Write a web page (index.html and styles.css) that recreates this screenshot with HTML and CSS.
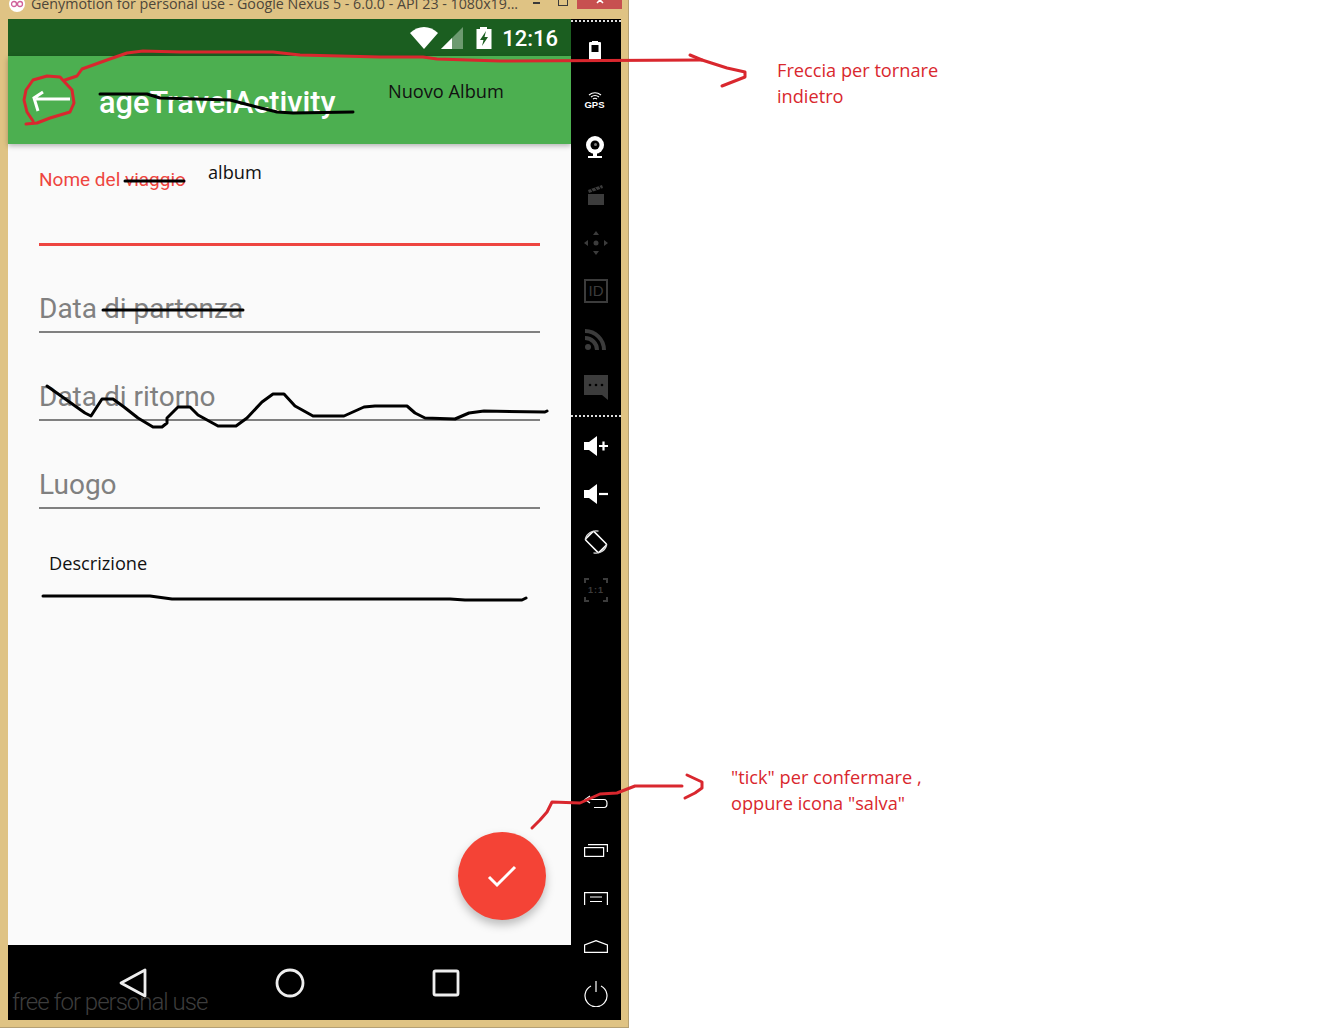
FILE: index.html
```html
<!DOCTYPE HTML>
<html>
	<head>
		<meta charset="utf-8">
		<title>Nuovo Album</title>
		<link rel="stylesheet" href="styles.css">
	</head>
	<body>
		<div class="window">
			<div class="titlebar">
				<svg class="app-logo" width="16" height="12" viewBox="0 0 16 12"><circle cx="8" cy="4" r="8" fill="#fff"/><circle cx="5" cy="4" r="2.5" fill="none" stroke="#d0609a" stroke-width="1.3"/><circle cx="11" cy="4" r="2.5" fill="none" stroke="#d0609a" stroke-width="1.3"/></svg>
				<span class="window-title">Genymotion for personal use - Google Nexus 5 - 6.0.0 - API 23 - 1080x19...</span>
				<span class="win-min"></span>
				<span class="win-max"></span>
				<span class="win-close">
					<svg width="10" height="6" viewBox="0 0 10 6"><path d="M1 -3 L7 3 M7 -3 L1 3" transform="translate(1 0)" stroke="#fff" stroke-width="1.6" fill="none"/></svg>
				</span>
			</div>
			<div class="device">
				<div class="screen">
					<div class="statusbar">
						<svg width="28" height="22" viewBox="0 0 28 22"><path d="M0 6 C8 -2 20 -2 28 6 L14 22 Z" fill="#fff"/></svg>
						<svg class="signal" width="22" height="22" viewBox="0 0 22 22"><path d="M22 0 V22 H0 Z" fill="#6d9a70"/><path d="M11 11 V22 H0 Z" fill="#fff"/></svg>
						<svg class="batt" width="16" height="22" viewBox="0 0 16 22"><path d="M4 0 H11 V2 H15.500 V22 H0.500 V2 H4 Z" fill="#fff"/><path d="M10 4 L4 13 H7.500 L6 19 L12 10 H8.500 Z" fill="#1b5e20"/></svg>
						<span class="clock">12:16</span>
					</div>
					<div class="appbar">
						<svg class="up-arrow" width="40" height="26" viewBox="0 0 40 26"><path d="M39 9 H5 M12 2 L3 8 L7 21" fill="none" stroke="#fff" stroke-width="3"/></svg>
						<span class="app-title">ageTravelActivity</span>
					</div>
					<div class="content">
						<div class="field field-active"><span>Nome del viaggio</span></div>
						<div class="field"><span>Data di partenza</span></div>
						<div class="field"><span>Data di ritorno</span></div>
						<div class="field"><span>Luogo</span></div>
						<button class="fab">
							<svg width="30" height="24" viewBox="0 0 30 24"><path d="M2 13 L10 21 L28 3" fill="none" stroke="#fff" stroke-width="3"/></svg>
						</button>
					</div>
					<div class="navbar">
						<svg width="28" height="30" viewBox="0 0 28 30"><path d="M26 2 V28 L2 15 Z" fill="none" stroke="#eee" stroke-width="2.800" stroke-linejoin="round"/></svg>
						<svg width="30" height="30" viewBox="0 0 30 30"><circle cx="15" cy="15" r="13" fill="none" stroke="#eee" stroke-width="2.800"/></svg>
						<svg width="28" height="28" viewBox="0 0 28 28"><rect x="2" y="2" width="24" height="24" rx="1.500" fill="none" stroke="#eee" stroke-width="2.800"/></svg>
						<span class="watermark">free for personal use</span>
					</div>
				</div>
				<div class="sidebar">
					<div class="dots"></div>
					<div class="tool tool-left"><svg width="14" height="20" viewBox="0 0 14 20"><path d="M4 0 H10 V1 H12 Q13 1 13 2 V20 H1 V2 Q1 1 2 1 H4 Z" fill="#fff"/><rect x="3.500" y="4" width="7" height="7" fill="#000"/></svg></div>
					<div class="tool tool-left tool-gps">
						<svg width="14" height="8" viewBox="0 0 14 8"><path d="M1 3 Q7 -1.500 13 3 M3 5 Q7 2 11 5 M5 7 Q7 5.500 9 7" fill="none" stroke="#fff" stroke-width="1.200"/></svg>
						<span>GPS</span>
					</div>
					<div class="tool tool-left"><svg width="20" height="24" viewBox="0 0 20 24"><circle cx="10" cy="10" r="9" fill="#fff"/><circle cx="10" cy="10" r="4.500" fill="#000"/><circle cx="10.500" cy="9.500" r="1.500" fill="#777"/><path d="M8 18 V21 H3 V23 H17 V21 H12 V18 Z" fill="#fff"/></svg></div>
					<div class="tool dim"><svg width="18" height="20" viewBox="0 0 18 20"><path d="M1 9 H17 V20 H1 Z" fill="currentColor"/><path d="M1 5 L15 0 L16 3 L2 8 Z" fill="currentColor"/><path d="M4 4 L6 7 M8 2.500 L10 5.500 M12 1 L14 4" stroke="#000" stroke-width="1"/></svg></div>
					<div class="tool dim"><svg width="24" height="24" viewBox="0 0 24 24"><circle cx="12" cy="12" r="2.500" fill="currentColor"/><path d="M12 0 L15 4 H9 Z M12 24 L15 20 H9 Z M0 12 L4 9 V15 Z M24 12 L20 9 V15 Z" fill="currentColor"/></svg></div>
					<div class="tool dim"><div class="id-box">ID</div></div>
					<div class="tool dim"><svg width="22" height="22" viewBox="0 0 22 22"><circle cx="3" cy="19" r="3" fill="currentColor"/><path d="M0 10 A12 12 0 0 1 12 22 M0 3 A19 19 0 0 1 19 22" fill="none" stroke="currentColor" stroke-width="4"/></svg></div>
					<div class="tool dim"><svg width="24" height="25" viewBox="0 0 24 25"><path d="M0 0 H24 V25 L18 20 H0 Z" fill="currentColor"/><circle cx="6" cy="10" r="1.300" fill="#000"/><circle cx="12" cy="10" r="1.300" fill="#000"/><circle cx="18" cy="10" r="1.300" fill="#000"/></svg></div>
					<div class="dots dots-mid"></div>
					<div class="tool"><svg width="25" height="20" viewBox="0 0 25 20"><path d="M0 6 H5 L13 0 V20 L5 14 H0 Z" fill="#fff"/><path d="M15 10 H24 M19.500 5.500 V14.500" stroke="#fff" stroke-width="2.200"/></svg></div>
					<div class="tool"><svg width="25" height="20" viewBox="0 0 25 20"><path d="M0 6 H5 L13 0 V20 L5 14 H0 Z" fill="#fff"/><path d="M15 10 H24" stroke="#fff" stroke-width="2.200"/></svg></div>
					<div class="tool"><svg width="24" height="24" viewBox="0 0 24 24"><rect x="6" y="2.500" width="12" height="19" rx="1.500" transform="rotate(-45 12 12)" fill="none" stroke="#fff" stroke-width="1.500"/><path d="M1.200 9.500 A11 11 0 0 1 14.500 1.200 M22.800 14.500 A11 11 0 0 1 9.500 22.800" fill="none" stroke="#ddd" stroke-width="1.200"/></svg></div>
					<div class="tool dim"><div class="one-one">
						<svg width="24" height="24" viewBox="0 0 24 24"><path d="M0 0 H5 V2 H2 V5 H0 Z M24 0 H19 V2 H22 V5 H24 Z M0 24 H5 V22 H2 V19 H0 Z M24 24 H19 V22 H22 V19 H24 Z" fill="currentColor"/></svg>
						<span>1:1</span>
					</div></div>
					<div class="tool-gap"></div>
					<div class="tool"><svg width="24" height="14" viewBox="0 0 24 14"><path d="M6 1 L1 4.500 L6 8 M1 4.500 H20 Q23 4.500 23 8.500 Q23 12.500 20 12.500 H10" fill="none" stroke="#fff" stroke-width="1.200"/></svg></div>
					<div class="tool"><svg width="24" height="14" viewBox="0 0 24 14"><rect x="0.600" y="4.600" width="19" height="8.800" fill="none" stroke="#fff" stroke-width="1.200"/><path d="M4 1.600 H23.400 V9" fill="none" stroke="#fff" stroke-width="1.200"/></svg></div>
					<div class="tool"><svg width="24" height="13" viewBox="0 0 24 13"><path d="M0.600 13 V0.600 H23.400 V13 M6 5 H18 M6 9.500 H18" fill="none" stroke="#fff" stroke-width="1.200"/></svg></div>
					<div class="tool"><svg width="24" height="13" viewBox="0 0 24 13"><path d="M0.600 12.400 V5 L12 0.600 L23.400 5 V12.400 Z" fill="none" stroke="#fff" stroke-width="1.200"/></svg></div>
					<div class="tool"><svg width="24" height="26" viewBox="0 0 24 26"><path d="M7 5 A11 11 0 1 0 17 5 M12 0 V11" fill="none" stroke="#fff" stroke-width="1.200"/></svg></div>
				</div>
			</div>
		</div>

		<!-- pasted labels and hand drawn marks on top of the screenshot -->
		<span class="pasted pasted-album-title">Nuovo Album</span>
		<span class="pasted pasted-album">album</span>
		<span class="pasted pasted-desc">Descrizione</span>
		<svg class="scribbles" width="1331" height="1028" viewBox="0 0 1331 1028">
			<g class="ink-black">
				<path d="M100 94 L147 94 L160 98 L230 100 L253 106 L277 112 L293 113 L353 112"/>
				<path d="M125 181 L184 181"/>
				<path d="M103 310 L243 310"/>
				<path d="M47 386 L85 413 L91 416 L102 399 L113 399 L124 407 L138 418 L153 427 L162 427 L167 423 L167 418 L178 407 L190 407 L198 415 L218 426 L236 426 L247 418 L262 402 L273 394 L284 394 L295 406 L313 416 L344 416 L364 407 L375 406 L407 406 L415 413 L425 418 L455 419 L469 413 L484 411 L545 412 L547 411"/>
				<path d="M43 596 L150 596 L172 599 L450 599 L465 600 L522 600 L526 598"/>
			</g>
			<g class="ink-red">
				<path d="M26 124 L37 123 L50 118 L70 112 L74 103 L72 90 L60 77 L47 76 L33 80 L26 90 L24 100 L27 112 L33 121"/>
				<path d="M65 80 L77 76 L82 69 L107 60 L127 53 L143 51 L180 52 L273 52 L300 55 L380 57 L423 57 L437 59 L500 61 L702 60"/>
				<path d="M690 55 L702 60 L727 68 L745 72 L745 77 L722 86"/>
				<path d="M532 828 L540 820 L547 812 L552 802 L580 803 L600 794 L617 793 L635 786 L682 786"/>
				<path d="M687 775 L702 782 L702 788 L695 793 L685 798"/>
			</g>
		</svg>
		<p class="note note-back">Freccia per tornare<br>indietro</p>
		<p class="note note-tick">"tick" per confermare ,<br>oppure icona "salva"</p>
	</body>
</html>
```

FILE: styles.css
```css
* { margin: 0; padding: 0; box-sizing: border-box; }
html, body {
	height: 1028px;
	overflow: hidden;
}
body {
	background: #fff;
	font-family: Roboto, sans-serif;
	position: relative;
}
.window {
	background: #dfc384;
	border-right: 1px solid #b5a073;
	border-bottom: 1px solid #b5a073;
	display: flex;
	flex-direction: column;
	height: 1028px;
	width: 629px;
}
.titlebar {
	align-items: flex-start;
	display: flex;
	flex: none;
	height: 19px;
	overflow: hidden;
}
.app-logo {
	flex: none;
	margin-left: 9px;
}
.window-title {
	color: #4d463a;
	flex: none;
	font-family: "Open Sans", sans-serif;
	font-size: 14.250px;
	line-height: 20px;
	margin: -6px 0 0 6px;
	width: 495px;
	white-space: nowrap;
}
.win-min {
	background: #3a3a3a;
	flex: none;
	height: 2px;
	margin: 2px 0 0 7px;
	width: 7px;
}
.win-max {
	border: 1px solid #3a3a3a;
	flex: none;
	height: 8px;
	margin: -2px 0 0 18px;
	width: 10px;
}
.win-close {
	background: #c75050;
	display: flex;
	flex: none;
	height: 9px;
	justify-content: center;
	margin-left: 9px;
	width: 45px;
}
.device {
	display: flex;
	flex: none;
	height: 1001px;
	margin-left: 8px;
}
.screen {
	display: flex;
	flex: none;
	flex-direction: column;
	width: 563px;
}
.statusbar {
	align-items: center;
	background: #1b5e20;
	display: flex;
	flex: none;
	height: 37px;
	justify-content: flex-end;
	padding-right: 13px;
}
.signal { margin-left: 3px; }
.batt { margin-left: 13px; }
.clock {
	color: #fff;
	font-size: 22px;
	font-weight: 500;
	margin: 2px 0 0 10px;
}
.appbar {
	align-items: center;
	background: #4caf50;
	box-shadow: 0 2px 5px rgba(0, 0, 0, 0.28);
	display: flex;
	flex: none;
	height: 88px;
	padding-left: 23px;
	position: relative;
}
.up-arrow {
	flex: none;
	margin-top: 5px;
}
.app-title {
	color: #fff;
	font-size: 30.700px;
	font-weight: 500;
	margin: 4px 0 0 28px;
}
.content {
	background: #fafafa;
	display: flex;
	flex: 1;
	flex-direction: column;
	padding: 0 31px 25px;
}
.field {
	align-items: flex-end;
	border-bottom: 2px solid #808080;
	color: #808080;
	display: flex;
	flex: none;
	font-size: 28px;
	height: 88px;
	padding-bottom: 6px;
}
.field-active {
	align-items: flex-start;
	border-bottom: 3px solid #ee4540;
	color: #ee4540;
	font-size: 19px;
	height: 102px;
	margin-bottom: -1px;
	padding: 24px 0 0;
}
.fab {
	align-items: center;
	align-self: flex-end;
	background: #f44336;
	border: none;
	border-radius: 50%;
	box-shadow: 0 5px 10px rgba(0, 0, 0, 0.25);
	display: flex;
	height: 88px;
	justify-content: center;
	margin: auto -6px 0 0;
	width: 88px;
}
.navbar {
	align-items: center;
	background: #000;
	display: flex;
	flex: none;
	height: 75px;
	overflow: hidden;
	padding: 0 111px;
	justify-content: space-between;
	position: relative;
}
.watermark {
	bottom: 4px;
	color: #3d3d3d;
	font-size: 24px;
	font-weight: 300;
	left: 4px;
	letter-spacing: -1px;
	position: absolute;
	white-space: nowrap;
}
.sidebar {
	background: #000;
	display: flex;
	flex: none;
	flex-direction: column;
	padding-bottom: 2px;
	width: 50px;
}
.dots {
	border-top: 2px dotted #ddd;
	flex: none;
	height: 7px;
	margin: 1px 0 0;
}
.dots-mid {
	height: 7px;
	margin: 4px 0 0;
}
.tool {
	align-items: center;
	color: #3c3c3c;
	display: flex;
	flex: none;
	flex-direction: column;
	height: 48px;
	justify-content: center;
}
.tool-left { padding-right: 3px; }
.tool-gps { padding-top: 3px; }
.tool-gps span {
	color: #fff;
	font-family: "Liberation Sans", sans-serif;
	font-size: 9.500px;
	font-weight: 700;
	line-height: 9px;
}
.id-box {
	border: 2px solid #3c3c3c;
	font-family: "Liberation Sans", sans-serif;
	font-size: 15px;
	height: 24px;
	line-height: 20px;
	text-align: center;
	width: 24px;
}
.one-one {
	height: 24px;
	position: relative;
	width: 24px;
}
.one-one span {
	font-family: "Liberation Sans", sans-serif;
	font-size: 9px;
	font-weight: 700;
	left: 0;
	letter-spacing: 1px;
	line-height: 24px;
	position: absolute;
	text-align: center;
	top: 0;
	width: 24px;
}
.tool-gap { flex: 1; }
.pasted {
	color: #111;
	font-family: "Open Sans", sans-serif;
	font-size: 18.200px;
	line-height: 24px;
	position: absolute;
	white-space: nowrap;
}
.pasted-album-title { left: 388px; top: 79px; }
.pasted-album { left: 208px; top: 160px; }
.pasted-desc { left: 49px; top: 551px; }
.scribbles {
	left: 0;
	pointer-events: none;
	position: absolute;
	top: 0;
}
.scribbles path {
	fill: none;
	stroke-linecap: round;
	stroke-linejoin: round;
}
.ink-black path {
	stroke: #000;
	stroke-width: 3;
}
.ink-red path {
	stroke: #d9272e;
	stroke-width: 3;
}
.note {
	color: #d9272e;
	font-family: "Open Sans", sans-serif;
	font-size: 18.200px;
	line-height: 26px;
	position: absolute;
	white-space: nowrap;
}
.note-back { left: 777px; top: 57px; }
.note-tick { left: 731px; top: 764px; }
```
